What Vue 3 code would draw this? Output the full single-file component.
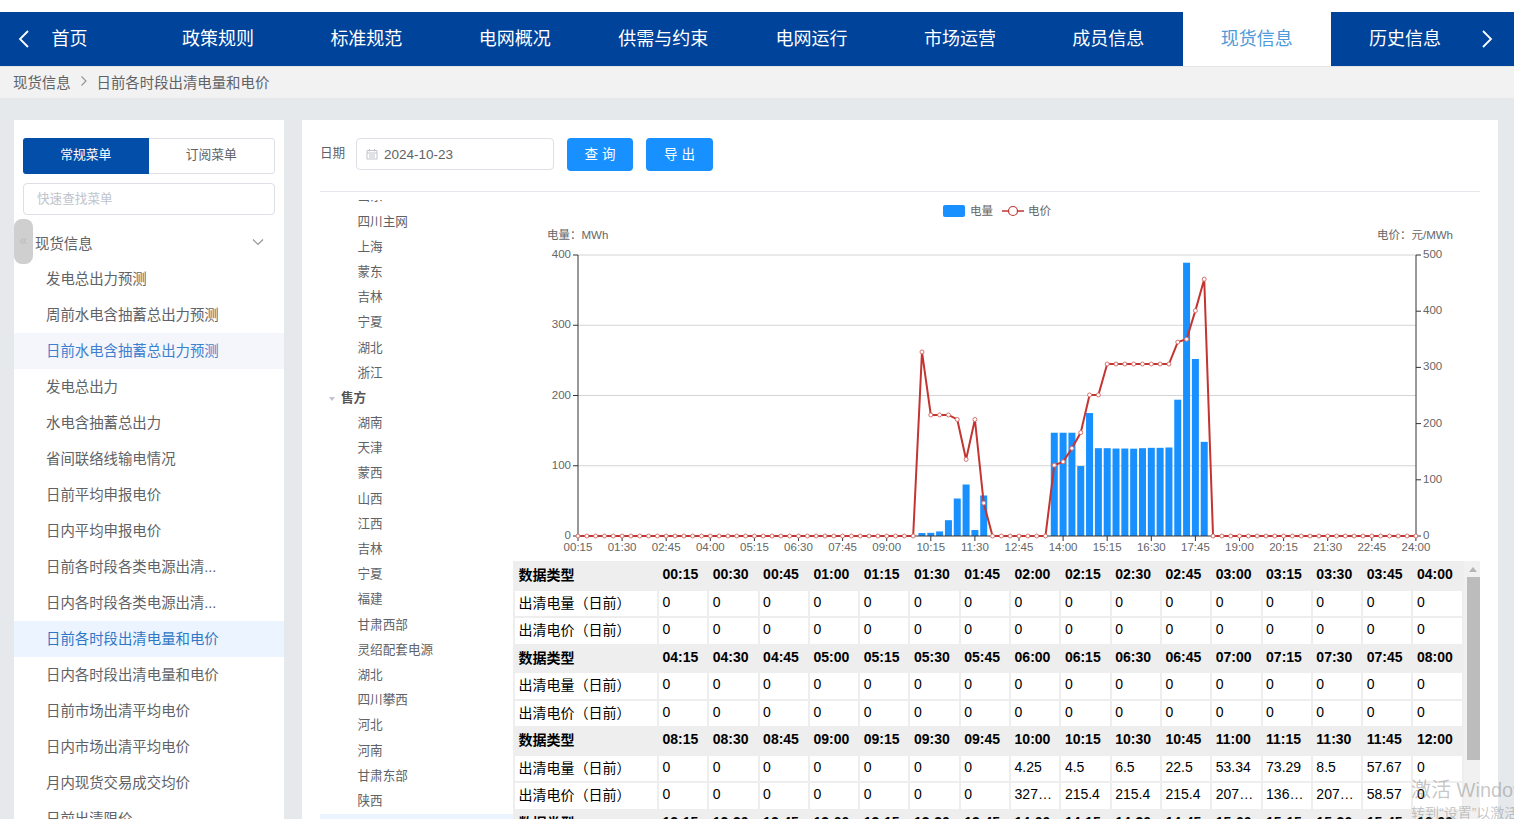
<script setup>
import { computed } from 'vue'

const navItems = ['首页', '政策规则', '标准规范', '电网概况', '供需与约束', '电网运行', '市场运营', '成员信息', '现货信息', '历史信息']

const menuItems = [
  { name: '发电总出力预测' },
  { name: '周前水电含抽蓄总出力预测' },
  { name: '日前水电含抽蓄总出力预测', hover: true },
  { name: '发电总出力' },
  { name: '水电含抽蓄总出力' },
  { name: '省间联络线输电情况' },
  { name: '日前平均申报电价' },
  { name: '日内平均申报电价' },
  { name: '日前各时段各类电源出清...' },
  { name: '日内各时段各类电源出清...' },
  { name: '日前各时段出清电量和电价', active: true },
  { name: '日内各时段出清电量和电价' },
  { name: '日前市场出清平均电价' },
  { name: '日内市场出清平均电价' },
  { name: '月内现货交易成交均价' },
  { name: '日前出清限价' }
]

const treeItems = [
  { name: '山东' }, { name: '四川主网' }, { name: '上海' }, { name: '蒙东' }, { name: '吉林' }, { name: '宁夏' }, { name: '湖北' }, { name: '浙江' },
  { name: '售方', parent: true },
  { name: '湖南' }, { name: '天津' }, { name: '蒙西' }, { name: '山西' }, { name: '江西' }, { name: '吉林' }, { name: '宁夏' }, { name: '福建' },
  { name: '甘肃西部' }, { name: '灵绍配套电源' }, { name: '湖北' }, { name: '四川攀西' }, { name: '河北' }, { name: '河南' }, { name: '甘肃东部' }, { name: '陕西' },
  { name: '', current: true }
]

// 96 points, 00:15 .. 24:00
const times = Array.from({ length: 96 }, (_, i) => {
  const m = (i + 1) * 15
  return String(Math.floor(m / 60)).padStart(2, '0') + ':' + String(m % 60).padStart(2, '0')
})

const power = new Array(96).fill(0)
const price = new Array(96).fill(0)
const powerPart = [4.25, 4.5, 6.5, 22.5, 53.34, 73.29, 8.5, 57.67]
const pricePart = [327.45, 215.4, 215.4, 215.4, 207.33, 136.28, 207.33, 58.57]
powerPart.forEach((v, i) => { power[39 + i] = v })
pricePart.forEach((v, i) => { price[39 + i] = v })
const powerPart2 = [147, 147, 147, 99.6, 175, 125, 125, 124.5, 124.5, 124.3, 125, 125.5, 125.5, 126, 194, 389, 252, 134]
const pricePart2 = [126, 132, 156, 184, 251, 251, 306, 306, 306, 306, 306, 306, 306, 306, 345, 350, 401, 457]
powerPart2.forEach((v, i) => { power[54 + i] = v })
pricePart2.forEach((v, i) => { price[54 + i] = v })

const xOf = i => 578 + i * 8.82
const yLeft = v => 536 - v * 0.7025
const yRight = v => 536 - v * 0.562

const leftTicks = [0, 100, 200, 300, 400]
const rightTicks = [0, 100, 200, 300, 400, 500]
const xTicks = computed(() => times.map((t, i) => ({ t, i })).filter(o => o.i % 5 === 0))
const linePoints = computed(() => price.map((v, i) => `${xOf(i)},${yRight(v)}`).join(' '))

const rows = computed(() => {
  const out = []
  for (let g = 0; g < 4; g++) {
    const idx = Array.from({ length: 16 }, (_, k) => g * 16 + k)
    out.push({ head: true, label: '数据类型', cells: idx.map(i => times[i]) })
    out.push({ label: '出清电量（日前）', cells: idx.map(i => power[i]) })
    out.push({ label: '出清电价（日前）', cells: idx.map(i => price[i]) })
  }
  return out
})
</script>

<template>
  <div class="page">
    <nav class="topnav">
      <div class="nav-list">
        <a v-for="item in navItems" :key="item" class="nav-item" :class="{ active: item === '现货信息' }">{{ item }}</a>
      </div>
      <svg class="nav-arrow left" viewBox="0 0 12 20" width="12" height="20"><path d="M10 2 2 10l8 8" fill="none" stroke="#fff" stroke-width="1.8" /></svg>
      <svg class="nav-arrow right" viewBox="0 0 12 20" width="12" height="20"><path d="M2 2l8 8-8 8" fill="none" stroke="#fff" stroke-width="1.8" /></svg>
    </nav>

    <div class="crumb">
      <span>现货信息</span>
      <svg viewBox="0 0 8 12" width="8" height="12"><path d="M1.5 1.5 6 6l-4.500 4.500" fill="none" stroke="#909399" stroke-width="1.1" /></svg>
      <span>日前各时段出清电量和电价</span>
    </div>

    <div class="main">
      <aside class="sidebar">
        <div class="tabs">
          <div class="tab on">常规菜单</div>
          <div class="tab">订阅菜单</div>
        </div>
        <div class="search">快速查找菜单</div>
        <div class="menu-title">
          <span>现货信息</span>
          <svg viewBox="0 0 12 8" width="12" height="8"><path d="M1 1.500 6 6.500l5-5" fill="none" stroke="#909399" stroke-width="1.100" /></svg>
        </div>
        <div v-for="m in menuItems" :key="m.name" class="menu-item" :class="{ active: m.active, hover: m.hover }">{{ m.name }}</div>
        <div class="collapse">«</div>
      </aside>

      <section class="content">
        <div class="filter">
          <span class="filter-label">日期</span>
          <div class="date-input">
            <svg viewBox="0 0 12 12" width="12" height="12">
              <path d="M1 2.500h10v8.500H1zM1 5h10M3.500 1v2.500M8.500 1v2.500M3 7h6M3 9h6" fill="none" stroke="#c0c4cc" stroke-width="1" />
            </svg>
            <span>2024-10-23</span>
          </div>
          <button class="btn query">查询</button>
          <button class="btn">导出</button>
        </div>

        <div class="body">
          <div class="tree">
            <div class="tree-inner">
              <div
                v-for="(t, i) in treeItems"
                :key="i"
                class="tree-row"
                :class="{ parent: t.parent, current: t.current }"
              >
                <i v-if="t.parent" class="caret"></i>{{ t.name }}
              </div>
            </div>
          </div>

          <div class="right">
            <svg class="chart" viewBox="513 192 967 369" width="967" height="369">
              <!-- legend -->
              <rect x="943" y="205" width="22" height="12" rx="2" fill="#1890ff" />
              <text x="970" y="215" class="lbl" font-size="11">电量</text>
              <line x1="1002" x2="1024" y1="211" y2="211" stroke="#c23531" stroke-width="1.500" />
              <circle cx="1013" cy="211" r="4.500" fill="#fff" stroke="#c23531" stroke-width="1.200" />
              <text x="1028" y="215" class="lbl" font-size="11">电价</text>

              <text x="547" y="239" class="lbl">电量：MWh</text>
              <text x="1453" y="239" class="lbl" text-anchor="end">电价：元/MWh</text>

              <line v-for="v in leftTicks.slice(1)" :key="'g' + v" x1="578" x2="1416" :y1="yLeft(v)" :y2="yLeft(v)" stroke="#d4d4d4" />
              <g v-for="v in leftTicks" :key="'l' + v">
                <line x1="573" x2="578" :y1="yLeft(v)" :y2="yLeft(v)" stroke="#333" />
                <text x="571" :y="yLeft(v) + 3" class="lbl" text-anchor="end">{{ v }}</text>
              </g>
              <g v-for="v in rightTicks" :key="'r' + v">
                <line x1="1416" x2="1421" :y1="yRight(v)" :y2="yRight(v)" stroke="#333" />
                <text x="1423" :y="yRight(v) + 3" class="lbl">{{ v }}</text>
              </g>

              <template v-for="(v, i) in power" :key="'b' + i">
                <rect v-if="v > 0" :x="xOf(i) - 3.500" :y="yLeft(v)" width="7" :height="v * 0.7025" fill="#1890ff" />
              </template>

              <line x1="578" x2="578" y1="255" y2="536" stroke="#333" />
              <line x1="1416" x2="1416" y1="255" y2="536" stroke="#333" />
              <line x1="578" x2="1416" y1="536" y2="536" stroke="#333" />
              <g v-for="o in xTicks" :key="o.t">
                <line :x1="xOf(o.i)" :x2="xOf(o.i)" y1="536" y2="541" stroke="#333" />
                <text :x="xOf(o.i)" y="551" class="lbl" text-anchor="middle">{{ o.t }}</text>
              </g>

              <polyline :points="linePoints" fill="none" stroke="#c23531" stroke-width="2" />
              <circle v-for="(v, i) in price" :key="'p' + i" :cx="xOf(i)" :cy="yRight(v)" r="2" fill="#fff" stroke="#d6706c" stroke-width="1" />
            </svg>

            <div class="table-wrap">
              <table class="grid">
                <colgroup>
                  <col class="col-first" />
                  <col v-for="n in 16" :key="n" class="col-val" />
                </colgroup>
                <tbody>
                  <tr v-for="(r, i) in rows" :key="i" :class="{ head: r.head }">
                    <td class="first">{{ r.label }}</td>
                    <td v-for="(c, k) in r.cells" :key="k">{{ c }}</td>
                  </tr>
                </tbody>
              </table>
              <div class="scrollbar">
                <i class="up"></i>
                <div class="thumb"></div>
              </div>
            </div>
          </div>
        </div>
      </section>
    </div>

    <div class="watermark">
      <div class="wm1">激活 Windows</div>
      <div class="wm2">转到“设置”以激活 Windows</div>
    </div>
  </div>
</template>

<style>
html, body {
  margin: 0;
  overflow: hidden;
}
</style>

<style scoped>
.page {
  position: relative;
  width: 1514px;
  height: 819px;
  overflow: hidden;
  padding-top: 12px;
  box-sizing: border-box;
  background: #fff;
  font-family: "Liberation Sans", "Noto Sans CJK SC", sans-serif;
  color: #606266;
}

.topnav {
  position: relative;
  height: 54px;
  background: #00439b;
  overflow: hidden;
}

.nav-list {
  display: flex;
  margin-left: -4.6px;
}

.nav-item {
  flex: 0 0 148.4px;
  height: 54px;
  line-height: 54px;
  text-align: center;
  font-size: 18px;
  color: #fff;
}

.nav-item.active {
  background: #fff;
  color: #4f9ad9;
}

.nav-arrow {
  position: absolute;
  top: 17px;
}

.nav-arrow.left {
  left: 18px;
}

.nav-arrow.right {
  left: 1481px;
}

.crumb {
  display: flex;
  align-items: center;
  gap: 9px;
  height: 28px;
  padding: 0 0 3px 13px;
  border-top: 1px solid #e4e4e4;
  background: #f2f2f2;
  font-size: 14.4px;
}

.main {
  display: flex;
  gap: 18px;
  height: 721px;
  padding: 22px 16px 0 14px;
  box-sizing: border-box;
  background: #e6e9ec;
}

.sidebar {
  position: relative;
  flex: 0 0 270px;
  padding-top: 18px;
  background: #fff;
  overflow: hidden;
}

.tabs {
  display: flex;
  height: 36px;
  margin: 0 9px;
  box-sizing: border-box;
  border: 1px solid #dcdfe6;
  border-radius: 3px;
  font-size: 12.8px;
}

.tab {
  flex: 1;
  line-height: 32px;
  text-align: center;
}

.tab.on {
  margin: -1px 0 -1px -1px;
  line-height: 34px;
  border-radius: 3px 0 0 3px;
  background: #034ea9;
  color: #fff;
}

.search {
  height: 32px;
  margin: 9px 9px 10px;
  padding-left: 13px;
  box-sizing: border-box;
  border: 1px solid #dcdfe6;
  border-radius: 4px;
  line-height: 30px;
  font-size: 12.6px;
  color: #c0c4cc;
}

.menu-title {
  display: flex;
  align-items: center;
  justify-content: space-between;
  height: 34px;
  padding: 0 20px 2px 21px;
  font-size: 14.4px;
}

.menu-item {
  height: 36px;
  line-height: 36px;
  padding-left: 32px;
  font-size: 14.4px;
  white-space: nowrap;
}

.menu-item.hover {
  background: #f4f6fc;
  color: #3f7fd0;
}

.menu-item.active {
  background: #ecf5ff;
  color: #2f77c6;
}

.collapse {
  position: absolute;
  left: 0;
  top: 99px;
  width: 19px;
  height: 45px;
  border-radius: 8px;
  background: #cfcfcf;
  color: #bdbdbd;
  font-size: 14px;
  line-height: 43px;
  text-align: center;
}

.content {
  flex: 1;
  padding: 18px 18px 0;
  background: #fff;
  overflow: hidden;
}

.filter {
  display: flex;
  align-items: flex-start;
  height: 53px;
  box-sizing: content-box;
  border-bottom: 1px solid #e4e7ed;
}

.filter-label {
  width: 36px;
  line-height: 30px;
  font-size: 12.6px;
}

.date-input {
  display: flex;
  align-items: center;
  gap: 6px;
  width: 198px;
  height: 32px;
  padding-left: 9px;
  box-sizing: border-box;
  border: 1px solid #dcdfe6;
  border-radius: 4px;
  font-size: 13.5px;
}

.btn {
  width: 67px;
  height: 33px;
  margin-left: 13px;
  padding: 0 0 3px 4px;
  border: 0;
  border-radius: 4px;
  background: #1890ff;
  color: #fff;
  font-family: inherit;
  font-size: 13.5px;
  letter-spacing: 4px;
}

.query {
  width: 66px;
}

.body {
  display: flex;
}

.tree {
  flex: 0 0 193px;
  height: 640px;
  margin-top: 8px;
  overflow: hidden;
}

.tree-inner {
  margin-top: -15.6px;
}

.tree-row {
  height: 25.2px;
  line-height: 25.2px;
  padding-left: 37.5px;
  font-size: 12.6px;
  white-space: nowrap;
}

.tree-row.parent {
  position: relative;
  padding-left: 21px;
  font-weight: 700;
  color: #555;
}

.caret {
  position: absolute;
  left: 9px;
  top: 11px;
  border: 3.500px solid transparent;
  border-top: 4.500px solid #c0c4cc;
}

.tree-row.current {
  background: #ecf5ff;
}

.right {
  flex: 1;
  min-width: 0;
}

.chart {
  display: block;
}

.lbl {
  font-size: 11.500px;
  fill: #666;
}

.table-wrap {
  display: flex;
  background: #f1f1f1;
}

.grid {
  width: 949px;
  flex: none;
  table-layout: fixed;
  border-collapse: collapse;
  background: #fff;
  font-size: 14px;
  color: #000;
}

.col-first {
  width: 144px;
}

.col-val {
  width: 50.300px;
}

.grid td {
  height: 27.500px;
  padding: 0 5px 3px 3.500px;
  box-sizing: border-box;
  border: 2px solid #eee;
  overflow: hidden;
  text-overflow: ellipsis;
  white-space: nowrap;
}

.grid .first {
  padding-right: 0;
}

.grid tr.head td {
  padding-right: 0;
  background: #eee;
  font-weight: 700;
}

.scrollbar {
  flex: 0 0 18px;
  padding: 6px 2px 0 3px;
  box-sizing: border-box;
}

.up {
  display: block;
  width: 0;
  margin: 0 auto 5px;
  border: 4px solid transparent;
  border-top: 0;
  border-bottom: 5px solid #b5b5b5;
}

.thumb {
  height: 183px;
  background: #bcbcbc;
}

.watermark {
  position: absolute;
  left: 1411px;
  top: 777px;
  color: rgba(120, 120, 120, 0.42);
  white-space: nowrap;
}

.wm1 {
  font-size: 20px;
  line-height: 26px;
}

.wm2 {
  font-size: 14px;
  line-height: 20px;
}
</style>
